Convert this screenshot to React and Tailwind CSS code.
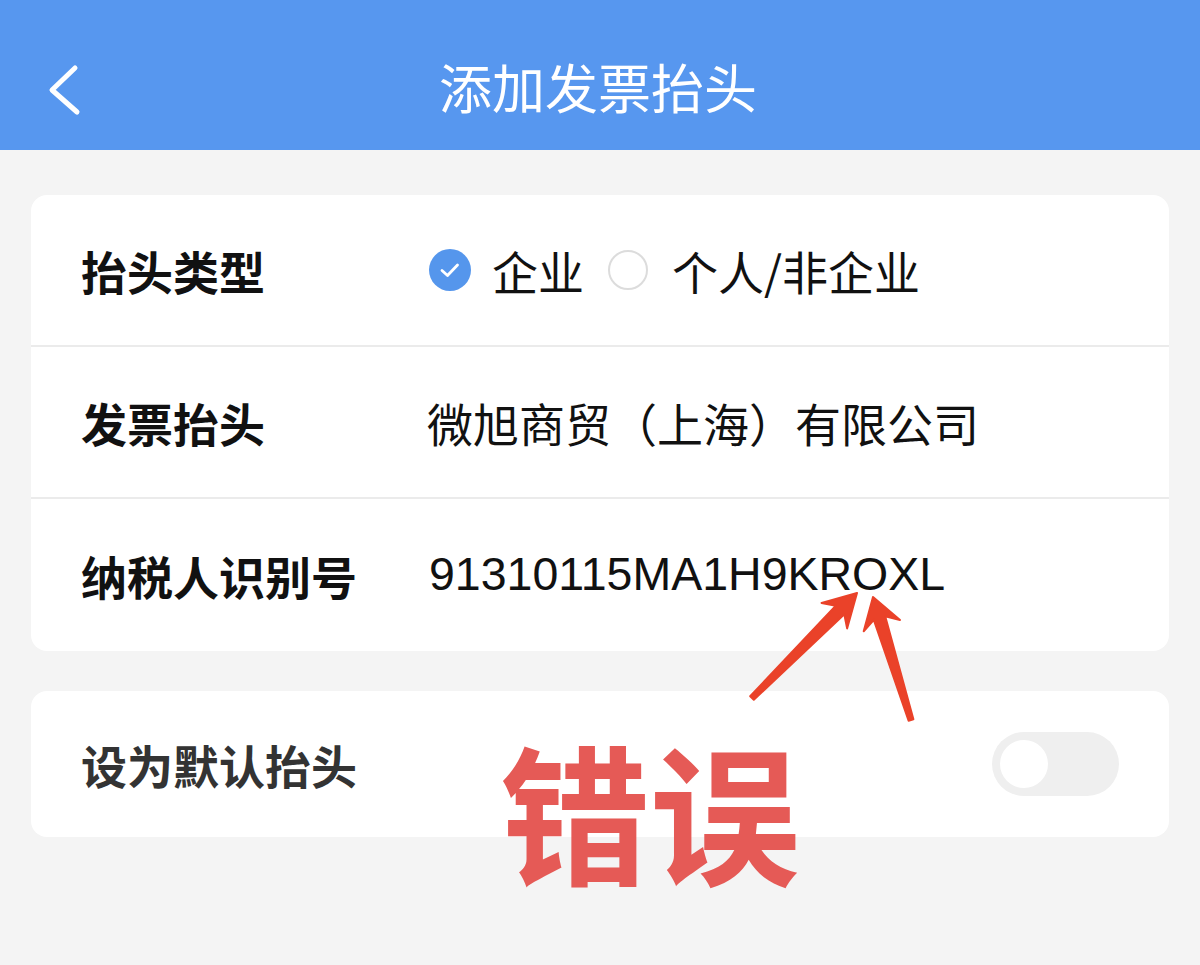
import React, { useState } from 'react';

const font = { fontFamily: '"Noto Sans CJK SC", "Liberation Sans", sans-serif' };

// builds a tapered annotation arrow as polygon points
const arrowPoints = (tail, tip, headLen, headHalf, neckHalf, tailHalf) => {
  const dx = tip[0] - tail[0];
  const dy = tip[1] - tail[1];
  const len = Math.hypot(dx, dy);
  const ux = dx / len;
  const uy = dy / len;
  const px = -uy;
  const py = ux;
  const base = [tip[0] - ux * headLen, tip[1] - uy * headLen];
  const neck = [tip[0] - ux * (headLen - 8), tip[1] - uy * (headLen - 8)];
  const pts = [
    [tail[0] + px * tailHalf, tail[1] + py * tailHalf],
    [neck[0] + px * neckHalf, neck[1] + py * neckHalf],
    [base[0] + px * headHalf, base[1] + py * headHalf],
    tip,
    [base[0] - px * headHalf, base[1] - py * headHalf],
    [neck[0] - px * neckHalf, neck[1] - py * neckHalf],
    [tail[0] - px * tailHalf, tail[1] - py * tailHalf],
  ];
  return pts.map((p) => p.map((v) => v.toFixed(1)).join(',')).join(' ');
};

const Radio = ({ checked }) =>
  checked ? (
    <span className="flex items-center justify-center w-[42px] h-[42px] rounded-full bg-[#5596ec]">
      <svg width="26" height="26" viewBox="0 0 26 26">
        <polyline points="5,13.5 10.5,18.5 20.5,8" fill="none" stroke="#fff" strokeWidth="2.8" strokeLinecap="round" strokeLinejoin="round" />
      </svg>
    </span>
  ) : (
    <span className="w-[40px] h-[40px] rounded-full border-2 border-[#dcdcdc]" />
  );

const Row = ({ label, children, last }) => (
  <div className={`flex items-center h-[152px] pl-[50px] ${last ? '' : 'border-b-2 border-[#ebebeb]'}`}>
    <div className="w-[348px] shrink-0 text-[46px] font-bold text-[#111]">{label}</div>
    <div className="flex items-center text-[46px] text-[#111]">{children}</div>
  </div>
);

export default function App() {
  const [type, setType] = useState('company');
  const [isDefault, setIsDefault] = useState(false);

  return (
    <div className="relative w-[1200px] h-[965px] bg-[#f4f4f4] overflow-hidden" style={font}>
      <div className="relative flex items-center justify-center h-[150px] bg-[#5797ef]">
        <button className="absolute left-[38px] top-[58px] w-[48px] h-[60px] flex items-center justify-center">
          <svg width="40" height="56" viewBox="0 0 40 56">
            <polyline points="33,8 10,30 35,52" fill="none" stroke="#fff" strokeWidth="5" strokeLinecap="round" strokeLinejoin="round" />
          </svg>
        </button>
        <h1 className="mt-[22px] -ml-[4px] text-[53px] text-white leading-none">添加发票抬头</h1>
      </div>

      <div className="px-[31px] pt-[45px]">
        <div className="bg-white rounded-[16px]">
          <Row label="抬头类型">
            <button className="flex items-center" onClick={() => setType('company')}>
              <Radio checked={type === 'company'} />
              <span className="ml-[21px]">企业</span>
            </button>
            <button className="flex items-center ml-[24px]" onClick={() => setType('person')}>
              <Radio checked={type === 'person'} />
              <span className="ml-[24px]">个人/非企业</span>
            </button>
          </Row>
          <Row label="发票抬头">
            <span className="-ml-[2px]">微旭商贸（上海）有限公司</span>
          </Row>
          <Row label="纳税人识别号" last>
            <span className="text-[46.5px]" style={{ fontFamily: '"Liberation Sans", "Noto Sans CJK SC", sans-serif' }}>
              91310115MA1H9KROXL
            </span>
          </Row>
        </div>

        <div className="mt-[40px] bg-white rounded-[16px] h-[146px] flex items-center justify-between pl-[50px] pr-[50px]">
          <span className="text-[46px] font-bold text-[#333]">设为默认抬头</span>
          <button
            onClick={() => setIsDefault(!isDefault)}
            className={`w-[127px] h-[64px] rounded-full p-[8px] flex items-center ${isDefault ? 'bg-[#5596ec] justify-end' : 'bg-[#efefef] justify-start'}`}
          >
            <span className="block w-[48px] h-[48px] rounded-full bg-white" />
          </button>
        </div>
      </div>

      <div className="absolute left-[500px] top-[734px] text-[150px] font-bold leading-none text-[#e55a56]">
        错误
      </div>

      <svg className="absolute left-0 top-0" width="1200" height="965" viewBox="0 0 1200 965">
        <polygon points={arrowPoints([752, 698], [857, 593], 32, 18, 6, 2.5)} fill="#ea4229" strokeLinejoin="round" stroke="#ea4229" strokeWidth="2" />
        <polygon points={arrowPoints([911, 720], [873, 597], 30, 19, 6, 2.5)} fill="#ea4229" strokeLinejoin="round" stroke="#ea4229" strokeWidth="2" />
      </svg>
    </div>
  );
}
